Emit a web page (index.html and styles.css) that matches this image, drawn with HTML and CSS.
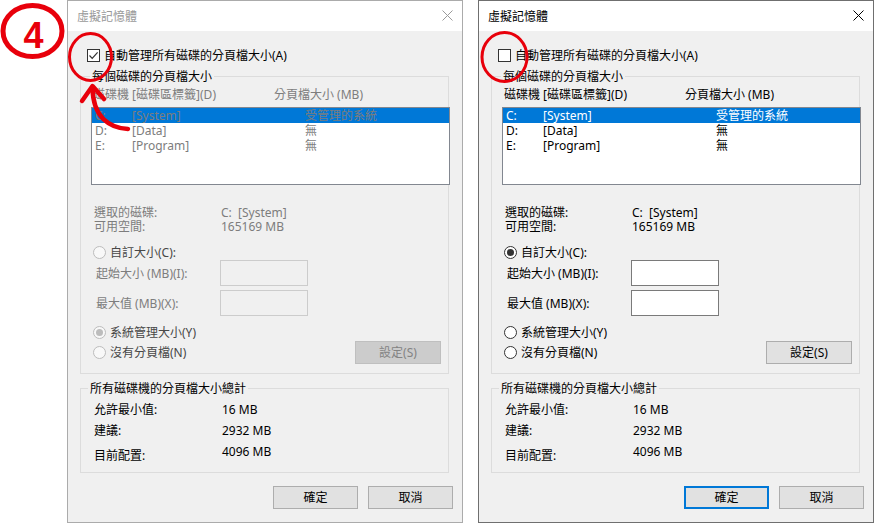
FILE: index.html
```html
<!DOCTYPE html>
<html lang="zh-Hant">
<head>
<meta charset="utf-8">
<title>虛擬記憶體</title>
<link rel="stylesheet" href="styles.css">
</head>
<body>
<div class="stage">

  <section class="dlg dlg-off">
    <header class="titlebar">
      <span class="title">虛擬記憶體</span>
      <svg class="close" viewBox="0 0 11 11" width="11" height="11"><path d="M0.5 0.5 L10.5 10.5 M10.5 0.5 L0.5 10.5"/></svg>
    </header>
    <div class="body">
      <div class="check-row">
        <span class="checkbox"><svg viewBox="0 0 11 11" width="11" height="11"><path d="M1.5 5.5 L4.2 8.3 L9.6 2.4"/></svg></span>
        <span class="check-label">自動管理所有磁碟的分頁檔大小(A)</span>
      </div>
      <div class="group group-drive">
        <div class="group-title">每個磁碟的分頁檔大小</div>
        <div class="col-head"><span class="ch1">磁碟機 [磁碟區標籤](D)</span><span>分頁檔大小 (MB)</span></div>
        <div class="listbox">
          <div class="lrow sel"><span class="c1">C:</span><span class="c2">[System]</span><span>受管理的系統</span></div>
          <div class="lrow"><span class="c1">D:</span><span class="c2">[Data]</span><span>無</span></div>
          <div class="lrow"><span class="c1">E:</span><span class="c2">[Program]</span><span>無</span></div>
        </div>
        <div class="info">
          <div class="irow"><span class="ilabel">選取的磁碟:</span><span>C:&nbsp;&nbsp;[System]</span></div>
          <div class="irow"><span class="ilabel">可用空間:</span><span>165169 MB</span></div>
        </div>
        <div class="radio-row r-custom"><span class="radio"></span><span class="rlabel">自訂大小(C):</span></div>
        <div class="field-row"><span class="flabel">起始大小 (MB)(I):</span><span class="textbox"></span></div>
        <div class="field-row f2"><span class="flabel">最大值 (MB)(X):</span><span class="textbox"></span></div>
        <div class="radio-row r-sys"><span class="radio checked"></span><span class="rlabel">系統管理大小(Y)</span></div>
        <div class="radio-row r-none"><span class="radio"></span><span class="rlabel">沒有分頁檔(N)</span><span class="btn btn-set">設定(S)</span></div>
      </div>
      <div class="group group-total">
        <div class="group-title">所有磁碟機的分頁檔大小總計</div>
        <div class="trow first"><span class="tlabel">允許最小值:</span><span>16 MB</span></div>
        <div class="trow"><span class="tlabel">建議:</span><span>2932 MB</span></div>
        <div class="trow"><span class="tlabel low">目前配置:</span><span>4096 MB</span></div>
      </div>
      <div class="buttons"><span class="btn">確定</span><span class="btn">取消</span></div>
    </div>
  </section>

  <section class="dlg dlg-on">
    <header class="titlebar">
      <span class="title">虛擬記憶體</span>
      <svg class="close" viewBox="0 0 11 11" width="11" height="11"><path d="M0.5 0.5 L10.5 10.5 M10.5 0.5 L0.5 10.5"/></svg>
    </header>
    <div class="body">
      <div class="check-row">
        <span class="checkbox"></span>
        <span class="check-label">自動管理所有磁碟的分頁檔大小(A)</span>
      </div>
      <div class="group group-drive">
        <div class="group-title">每個磁碟的分頁檔大小</div>
        <div class="col-head"><span class="ch1">磁碟機 [磁碟區標籤](D)</span><span>分頁檔大小 (MB)</span></div>
        <div class="listbox">
          <div class="lrow sel"><span class="c1">C:</span><span class="c2">[System]</span><span>受管理的系統</span></div>
          <div class="lrow"><span class="c1">D:</span><span class="c2">[Data]</span><span>無</span></div>
          <div class="lrow"><span class="c1">E:</span><span class="c2">[Program]</span><span>無</span></div>
        </div>
        <div class="info">
          <div class="irow"><span class="ilabel">選取的磁碟:</span><span>C:&nbsp;&nbsp;[System]</span></div>
          <div class="irow"><span class="ilabel">可用空間:</span><span>165169 MB</span></div>
        </div>
        <div class="radio-row r-custom"><span class="radio checked"></span><span class="rlabel">自訂大小(C):</span></div>
        <div class="field-row"><span class="flabel">起始大小 (MB)(I):</span><span class="textbox"></span></div>
        <div class="field-row f2"><span class="flabel">最大值 (MB)(X):</span><span class="textbox"></span></div>
        <div class="radio-row r-sys"><span class="radio"></span><span class="rlabel">系統管理大小(Y)</span></div>
        <div class="radio-row r-none"><span class="radio"></span><span class="rlabel">沒有分頁檔(N)</span><span class="btn btn-set">設定(S)</span></div>
      </div>
      <div class="group group-total">
        <div class="group-title">所有磁碟機的分頁檔大小總計</div>
        <div class="trow first"><span class="tlabel">允許最小值:</span><span>16 MB</span></div>
        <div class="trow"><span class="tlabel">建議:</span><span>2932 MB</span></div>
        <div class="trow"><span class="tlabel low">目前配置:</span><span>4096 MB</span></div>
      </div>
      <div class="buttons"><span class="btn btn-default">確定</span><span class="btn">取消</span></div>
    </div>
  </section>

  <svg class="annot" viewBox="0 0 874 523" width="874" height="523">
    <ellipse class="mark-big" cx="32.5" cy="31" rx="29.5" ry="25.5"/>
    <text class="step" x="33.5" y="48">4</text>
    <ellipse class="mark" cx="90.5" cy="57" rx="21" ry="23.5"/>
    <ellipse class="mark" cx="504.5" cy="57" rx="22.5" ry="24.5"/>
    <path class="arrow" d="M128 129 C110 128 93 118 92.5 88"/>
    <path class="arrow" d="M82 101 L92.5 86 L104 99"/>
  </svg>
</div>
</body>
</html>
```

FILE: styles.css
```css
* { box-sizing: border-box; }

html, body {
  margin: 0;
  padding: 0;
}

body {
  background: #ffffff;
  font-family: "Noto Sans", "Noto Sans CJK TC", sans-serif;
  font-size: 12px;
  color: #000000;
}

.stage {
  position: relative;
  width: 874px;
  height: 523px;
  display: flex;
  gap: 15px;
  padding-left: 67px;
  overflow: hidden;
}

/* ---------- dialog window ---------- */
.dlg {
  width: 396px;
  height: 523px;
  flex: none;
  border: 1px solid #6f6f6f;
  background: #f0f0f0;
  display: flex;
  flex-direction: column;
}

.dlg-off { border-color: #ababab; }

.titlebar {
  height: 30px;
  flex: none;
  background: #ffffff;
  display: flex;
  align-items: center;
  padding-left: 9px;
  padding-right: 9px;
}

.title {
  line-height: 15px;
  font-size: 12px;
  padding-top: 1px;
}

.close {
  margin-left: auto;
  margin-top: -2px;
  fill: none;
  stroke: #000000;
  stroke-width: 1;
}

.dlg-off .title { color: #9a9a9a; }
.dlg-off .close { stroke: #9a9a9a; }

.body {
  flex: 1;
  display: flex;
  flex-direction: column;
}

/* ---------- checkbox ---------- */
.check-row {
  display: flex;
  align-items: center;
  height: 13px;
  margin: 18px 0 0 19px;
  gap: 4px;
}

.checkbox {
  width: 13px;
  height: 13px;
  border: 1px solid #333333;
  background: #ffffff;
  display: flex;
  align-items: center;
  justify-content: center;
}

.checkbox svg {
  fill: none;
  stroke: #333333;
  stroke-width: 1.2;
}

.check-label { line-height: 15px; }

/* ---------- group boxes ---------- */
.group {
  border: 1px solid #dcdcdc;
  width: 369px;
  margin-left: 12px;
}

.group-title {
  width: max-content;
  height: 15px;
  line-height: 15px;
  padding: 0 2px;
  background: #f0f0f0;
  margin-top: -8px;
}

.group-drive {
  margin-top: 14px;
  padding-bottom: 9px;
}

.group-drive .group-title { margin-left: 9px; }

.col-head {
  display: flex;
  height: 15px;
  line-height: 15px;
  margin-top: 3px;
  padding-left: 12px;
}

.ch1 { width: 181px; }

/* ---------- list box ---------- */
.listbox {
  width: 359px;
  height: 78px;
  margin: 5px 0 0 10px;
  border: 1px solid #828790;
  background: #ffffff;
}

.lrow {
  display: flex;
  height: 15px;
  line-height: 15px;
  padding-left: 3px;
}

.lrow.sel {
  background: #0078d7;
  color: #ffffff;
}

.c1 { width: 37px; }
.c2 { width: 173px; }

/* ---------- selected drive info ---------- */
.info {
  margin-top: 21px;
  padding-left: 13px;
}

.irow {
  display: flex;
  height: 14px;
  line-height: 14px;
}

.ilabel { width: 127px; }

/* ---------- radios & fields ---------- */
.radio-row {
  display: flex;
  align-items: center;
  padding-left: 12px;
  gap: 4px;
  height: 15px;
  line-height: 15px;
}

.r-custom { margin-top: 11px; }
.r-sys { margin-top: 9px; }
.r-none {
  margin-top: 1px;
  height: 23px;
  padding-right: 7px;
}

.radio {
  width: 13px;
  height: 13px;
  flex: none;
  border: 1px solid #333333;
  border-radius: 50%;
  background: #ffffff;
  display: flex;
  align-items: center;
  justify-content: center;
}

.radio.checked::after {
  content: "";
  width: 7px;
  height: 7px;
  border-radius: 50%;
  background: #333333;
}

.field-row {
  display: flex;
  align-items: center;
  height: 26px;
  padding-left: 15px;
  line-height: 15px;
}

.field-row.f2 { margin-top: 4px; }

.flabel { width: 124px; }

.textbox {
  width: 88px;
  height: 26px;
  border: 1px solid #7a7a7a;
  background: #ffffff;
}

/* ---------- buttons ---------- */
.btn {
  width: 85px;
  height: 23px;
  border: 1px solid #adadad;
  background: #e1e1e1;
  display: flex;
  align-items: center;
  justify-content: center;
  line-height: 15px;
}

.btn-set {
  width: 86px;
  margin-left: auto;
}

.btn-default { border: 2px solid #0078d7; }

.buttons {
  display: flex;
  justify-content: flex-end;
  gap: 10px;
  margin-top: 13px;
  padding-right: 9px;
}

/* ---------- totals ---------- */
.group-total {
  margin-top: 14px;
  padding-bottom: 10px;
}

.group-total .group-title { margin-left: 7px; }

.trow {
  display: flex;
  align-items: center;
  height: 21px;
  line-height: 15px;
  padding-left: 13px;
}

.trow.first { margin-top: 3px; }

.tlabel { width: 128px; }
.tlabel.low { padding-top: 8px; }

/* ---------- disabled state (left dialog) ---------- */
.dlg-off .col-head,
.dlg-off .lrow,
.dlg-off .info,
.dlg-off .flabel { color: #7d7d7d; }

.dlg-off .rlabel { color: #474747; }

.dlg-off .radio {
  border-color: #bcbcbc;
  background: #f8f8f8;
}

.dlg-off .radio.checked::after { background: #bcbcbc; }

.dlg-off .textbox {
  border-color: #cccccc;
  background: #f0f0f0;
}

.dlg-off .btn-set {
  background: #cccccc;
  border-color: #bfbfbf;
  color: #838383;
}

/* ---------- annotations ---------- */
.annot {
  position: absolute;
  left: 0;
  top: 0;
  pointer-events: none;
}

.mark-big {
  fill: none;
  stroke: #e8000b;
  stroke-width: 5;
}

.mark {
  fill: none;
  stroke: #e8000b;
  stroke-width: 3;
}

.step {
  fill: #e8000b;
  font-family: "Liberation Sans", Arial, sans-serif;
  font-weight: bold;
  font-size: 36px;
  text-anchor: middle;
}

.arrow {
  fill: none;
  stroke: #e8000b;
  stroke-width: 4.5;
  stroke-linecap: round;
  stroke-linejoin: round;
}
```
